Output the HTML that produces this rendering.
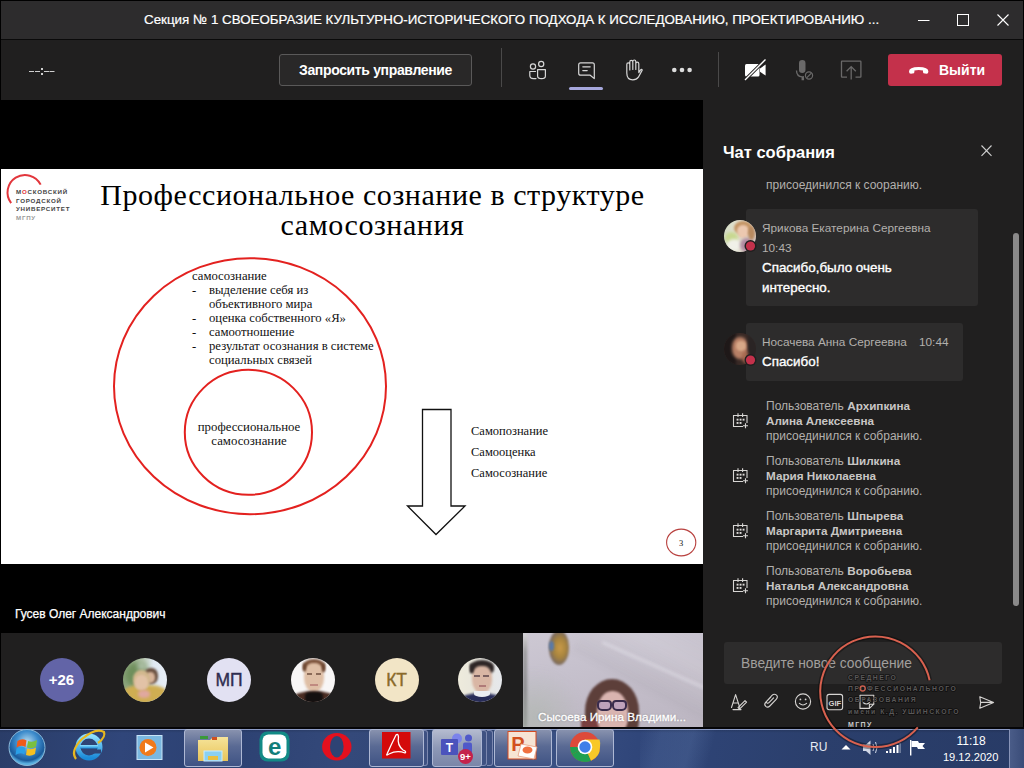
<!DOCTYPE html>
<html><head><meta charset="utf-8">
<style>
*{margin:0;padding:0;box-sizing:border-box}
html,body{width:1024px;height:768px;overflow:hidden;background:#000;font-family:"Liberation Sans",sans-serif}
.abs{position:absolute}
.av{top:25px;width:44px;height:44px;border-radius:50%;text-align:center;line-height:44px;overflow:hidden;isolation:isolate}
.cav{width:32px;height:32px;border-radius:50%;overflow:hidden;z-index:1;isolation:isolate}
.bub{background:#2d2c2c;border-radius:3px}
.nm{color:#b3b0ad;font-size:11.8px;line-height:14px;white-space:nowrap}
.msg{color:#fff;font-size:13.4px;-webkit-text-stroke:0.35px #fff;line-height:19.5px;white-space:nowrap}
.sys{color:#b3b0ad;font-size:12px;line-height:15px;white-space:nowrap}
.sysb{color:#b3b0ad;font-size:12px;line-height:15px;white-space:nowrap}
.sysb b{color:#c8c6c4;font-size:11.7px;line-height:1}
.serif{font-family:"Liberation Serif",serif}
#title{left:0;top:0;width:1024px;height:39px;background:#2d2c2d}
#tline{left:0;top:39px;width:1024px;height:1px;background:#0a0a0a}
#tool{left:0;top:40px;width:1024px;height:60px;background:#201f1f}
#video{left:0;top:100px;width:703px;height:533px;background:#000}
#slide{left:1px;top:169px;width:702px;height:395px;background:#fff;overflow:hidden}
#strip{left:0;top:633px;width:523px;height:95px;background:#201f1f}
#cam{left:523px;top:633px;width:180px;height:94px;background:#cfcbd0}
#chat{left:703px;top:100px;width:321px;height:628px;background:#201f1f}
#task{left:0;top:727px;width:1024px;height:41px;background:#2f4575}
.tbtn{top:2px;height:38px;border:1px solid #aeb8d4;border-radius:3px;background:linear-gradient(#8892ae,#5a6a94 45%,#3f5384)}
.tstk{top:3px;height:36px;border:1px solid #7c88b0;border-left:none;border-radius:0 3px 3px 0;background:#3e5182}
</style></head><body>
<div class="abs" style="left:0;top:0;width:1024px;height:727px;border-left:1px solid #000;border-right:1px solid #000;border-top:1px solid #000;z-index:5;pointer-events:none"></div>
<div id="title" class="abs">
<div class="abs" id="ttext" style="left:144px;top:11px;white-space:nowrap;color:#fff;font-size:13.35px;line-height:18px;-webkit-text-stroke:0.2px #fff">Секция № 1 СВОЕОБРАЗИЕ КУЛЬТУРНО-ИСТОРИЧЕСКОГО ПОДХОДА К ИССЛЕДОВАНИЮ, ПРОЕКТИРОВАНИЮ ...</div>
<svg class="abs" style="left:0;top:0" width="1024" height="38">
<line x1="918" y1="20.5" x2="929.5" y2="20.5" stroke="#fff" stroke-width="1"/>
<rect x="957.5" y="14.5" width="11" height="11" fill="none" stroke="#fff" stroke-width="1"/>
<path d="M997.5 14.5 L1008.5 25.5 M1008.5 14.5 L997.5 25.5" stroke="#fff" stroke-width="1.1"/>
</svg>
</div>
<div id="tline" class="abs"></div>
<div id="tool" class="abs">
<div class="abs" style="left:279px;top:14px;width:193px;height:32px;border:1px solid #5a5959;border-radius:3px;background:#292828;color:#fff;font-weight:bold;font-size:14px;letter-spacing:-0.35px;line-height:30px;text-align:center">Запросить управление</div>
<div class="abs" style="left:501px;top:8px;width:1px;height:39px;background:#4a4949"></div>
<div class="abs" style="left:718px;top:12px;width:1px;height:35px;background:#4a4949"></div>
<div class="abs" style="left:569px;top:47px;width:34px;height:3px;border-radius:2px;background:#a6a7dc"></div>
<div class="abs" style="left:888px;top:14px;width:114px;height:32px;border-radius:3px;background:#c4314b;color:#fff;font-weight:bold;font-size:14px;line-height:32px"><span class="abs" style="left:51px;top:0">Выйти</span></div>
<svg class="abs" style="left:0;top:-40px" width="1024" height="100">
<g fill="#cfcfcf"><rect x="29" y="71" width="5" height="1"/><rect x="35" y="71" width="5" height="1"/><rect x="44" y="71" width="5" height="1"/><rect x="49.5" y="71" width="5" height="1"/><rect x="41" y="68" width="2" height="2"/><rect x="41" y="73" width="2" height="2"/></g>
<g fill="none" stroke="#d6d6d6" stroke-width="1.2" stroke-linecap="round" stroke-linejoin="round">
<circle cx="533" cy="66.5" r="2.6"/><circle cx="541.2" cy="64" r="2.6"/>
<path d="M537.6 69.6 H545.4 V76 Q545.4 78.6 541.5 78.6 Q537.6 78.6 537.6 76 Z"/>
<path d="M535.5 71.5 H529.8 V75.5 Q529.8 78.6 533.5 78.6 H536"/>
<path d="M580.6 62.8 H592.4 Q594.3 62.8 594.3 64.8 V78.6 L590.2 75.2 H580.6 Q578.7 75.2 578.7 73.2 V64.8 Q578.7 62.8 580.6 62.8 Z"/>
<path d="M582.8 66.8 H590.2 M582.8 70.6 H587.2"/>
<path d="M626.8 73 V64.6 Q626.8 62.9 628.3 62.9 Q629.8 62.9 629.8 64.6 V70 M629.8 64.6 V61.9 Q629.8 60.3 631.3 60.3 Q632.8 60.3 632.8 61.9 V69.5 M632.8 61.9 V61.6 Q632.8 60 634.3 60 Q635.8 60 635.8 61.6 V69.5 M635.8 63.8 Q635.8 62.2 637.3 62.2 Q638.8 62.2 638.8 63.8 V72.6 L640.6 69.9 Q641.7 68.9 642.2 70.1 L638.4 77.2 Q636.6 79.8 632.8 79.8 Q626.8 79.8 626.8 73"/>
</g>
<g fill="#dcdcdc"><circle cx="674.3" cy="70" r="2.3"/><circle cx="682" cy="70" r="2.3"/><circle cx="689.6" cy="70" r="2.3"/></g>
<g>
<rect x="745" y="64" width="14.5" height="12.5" rx="1.5" fill="#fff"/>
<path d="M760 68.5 L765.6 64.6 V75.6 L760 71.8 Z" fill="#fff"/>
<line x1="743.5" y1="81.5" x2="766.5" y2="58.5" stroke="#201f1f" stroke-width="3.2"/>
<line x1="745" y1="80" x2="765.5" y2="59.5" stroke="#fff" stroke-width="1.3"/>
</g>
<g fill="#6a6969">
<rect x="799" y="60" width="6.5" height="13" rx="3.2"/>
<path d="M796.5 70.5 Q796.5 76.5 802.2 76.8 V79.6 H803.4 V76.8 L804 76.7" fill="none" stroke="#6a6969" stroke-width="1.3"/>
<circle cx="809" cy="75.5" r="5.2" fill="#201f1f"/>
<circle cx="809" cy="75.5" r="3.6" fill="none" stroke="#6a6969" stroke-width="1.2"/>
<line x1="806.6" y1="77.9" x2="811.4" y2="73.1" stroke="#6a6969" stroke-width="1.2"/>
</g>
<g fill="none" stroke="#6a6969" stroke-width="1.3">
<path d="M847 77.2 H842 Q841.5 77.2 841.5 76.6 V61.8 Q841.5 61.2 842 61.2 H860.3 Q860.9 61.2 860.9 61.8 V76.6 Q860.9 77.2 860.3 77.2 H855.5"/>
<path d="M851.2 79.6 V67 M846.6 71.2 L851.2 66.6 L855.8 71.2"/>
</g>
<path d="M909 71.5 Q909 67 918.7 67 Q928.4 67 928.4 71.5 Q928.4 73.8 926.5 73.8 L923.5 73.2 Q922.7 72.5 923 70.6 Q918.7 69.6 914.4 70.6 Q914.7 72.5 913.9 73.2 L910.9 73.8 Q909 73.8 909 71.5 Z" fill="#fff"/>
</svg>
</div>
<div id="video" class="abs"></div>
<div class="abs" style="left:15px;top:607px;color:#fff;font-size:12px;line-height:14px;white-space:nowrap;-webkit-text-stroke:0.25px #fff">Гусев Олег Александрович</div>
<div id="slide" class="abs">
<svg class="abs" style="left:-1px;top:-169px" width="704" height="564">
<path d="M40.65 184.66 A17.5 17.5 0 1 0 11.15 203.2" fill="none" stroke="#e2363c" stroke-width="2"/>
<ellipse cx="250" cy="386.2" rx="136" ry="128" fill="none" stroke="#e3211f" stroke-width="2"/>
<ellipse cx="248.4" cy="432.3" rx="63.6" ry="62.5" fill="none" stroke="#e3211f" stroke-width="2"/>
<path d="M422.5 409.5 H451 V506 H465 L436 534.5 L407.5 506 H422.5 Z" fill="#fff" stroke="#111" stroke-width="1.3"/>
<ellipse cx="681.2" cy="542.5" rx="14.6" ry="13.4" fill="none" stroke="#b8403e" stroke-width="1.1"/>
</svg>
<div class="abs logo" style="left:15px;top:19px;font-size:6.2px;line-height:8.7px;letter-spacing:0.75px;font-weight:bold;color:#444;white-space:nowrap">М<span style="color:#e2363c">О</span>СКОВСКИЙ<br>ГОРОДСКОЙ<br>УНИВЕРСИТЕТ<br><span style="color:#9a9a9a">МГПУ</span></div>
<div class="abs serif" id="stitle" style="left:0;width:743px;top:10.5px;text-align:center;font-size:30px;letter-spacing:0.55px;line-height:30.7px;color:#000">Профессиональное сознание в структуре<br>самосознания</div>
<div class="abs serif" style="left:191px;top:100px;font-size:12.7px;line-height:14.02px;color:#111;white-space:nowrap">самосознание<br>
-<span style="position:absolute;left:17px">выделение себя из</span><br><span style="position:relative;left:17px">объективного мира</span><br>
-<span style="position:absolute;left:17px">оценка собственного «Я»</span><br>
-<span style="position:absolute;left:17px">самоотношение</span><br>
-<span style="position:absolute;left:17px">результат осознания в системе</span><br><span style="position:relative;left:17px">социальных связей</span></div>
<div class="abs serif" style="left:148px;width:200px;top:251px;text-align:center;font-size:12.8px;line-height:14.2px;color:#111">профессиональное<br>самосознание</div>
<div class="abs serif" style="left:470px;top:252px;font-size:12.5px;line-height:21px;color:#111;white-space:nowrap">Самопознание<br>Самооценка<br>Самосознание</div>
<div class="abs serif" style="left:678px;top:368.5px;font-size:8.5px;line-height:10px;color:#111">3</div>
</div>
<div id="strip" class="abs">
<div class="abs av" style="left:39.5px;background:#6264a7;color:#fff;font-weight:bold;font-size:15px">+26</div>
<div class="abs av" style="left:123.3px;background:linear-gradient(90deg,#8aa27a 0,#b8c8b0 45%,#dfe8f2 70%,#e8eef6 100%)">
<div class="abs b" style="left:2px;top:4px;width:22px;height:26px;border-radius:50%;background:#6f8f5c;filter:blur(2.5px)"></div>
<div class="abs b" style="left:14px;top:3px;width:10px;height:10px;border-radius:50%;background:#a8bba0;filter:blur(2px)"></div>
<div class="abs b" style="left:0;top:27px;width:44px;height:20px;border-radius:40% 40% 0 0;background:#cfae52;filter:blur(1.5px)"></div>
<div class="abs b" style="left:21px;top:10px;width:14px;height:16px;border-radius:45%;background:#6a5040;filter:blur(1px)"></div>
<div class="abs b" style="left:23px;top:14px;width:9px;height:11px;border-radius:45%;background:#d8b49a;filter:blur(1px)"></div>
<div class="abs b" style="left:10px;top:12px;width:17px;height:20px;border-radius:45%;background:#d2b88e;filter:blur(1px)"></div>
<div class="abs b" style="left:12px;top:17px;width:13px;height:15px;border-radius:45%;background:#e2c2a6;filter:blur(1px)"></div>
<div class="abs b" style="left:15px;top:32px;width:12px;height:8px;border-radius:45%;background:#e0a8a0;filter:blur(1.5px)"></div>
</div>
<div class="abs av" style="left:207px;background:#e2e1f2;color:#2e2d50;font-size:17.5px;-webkit-text-stroke:0.4px #2e2d50">МП</div>
<div class="abs av" style="left:290.8px;background:#f8f6f6">
<div class="abs" style="left:12px;top:1px;width:22px;height:14px;border-radius:50% 50% 30% 30%;background:#7a5038;filter:blur(0.8px)"></div>
<div class="abs" style="left:13px;top:5px;width:20px;height:29px;border-radius:42% 42% 48% 48%;background:#dfbfa6;filter:blur(0.8px)"></div>
<div class="abs" style="left:12px;top:5px;width:3px;height:8px;border-radius:40%;background:#6a4430;filter:blur(0.8px)"></div>
<div class="abs" style="left:31px;top:5px;width:3px;height:9px;border-radius:40%;background:#6a4430;filter:blur(0.8px)"></div>
<div class="abs" style="left:16px;top:15px;width:5px;height:2px;background:#8a6a58;filter:blur(0.6px)"></div>
<div class="abs" style="left:25px;top:15px;width:5px;height:2px;background:#8a6a58;filter:blur(0.6px)"></div>
<div class="abs" style="left:19px;top:26px;width:8px;height:2px;background:#c08a80;filter:blur(0.6px)"></div>
<div class="abs" style="left:2px;top:33px;width:42px;height:14px;border-radius:50% 50% 0 0;background:#4a2c22;filter:blur(0.8px)"></div>
<div class="abs" style="left:14px;top:34px;width:18px;height:12px;border-radius:30%;background:#141010;filter:blur(0.8px)"></div>
</div>
<div class="abs av" style="left:374.6px;background:#f2e5c6;color:#8a6a2a;font-size:17.5px;-webkit-text-stroke:0.4px #8a6a2a">КТ</div>
<div class="abs av" style="left:458.4px;background:linear-gradient(90deg,#eeebdc 0,#e8e6dc 40%,#e6e8ec 100%)">
<div class="abs" style="left:12px;top:2px;width:24px;height:14px;border-radius:50% 50% 30% 30%;background:#2e2626;filter:blur(0.8px)"></div>
<div class="abs" style="left:14px;top:8px;width:20px;height:27px;border-radius:42% 42% 48% 48%;background:#d9b6a4;filter:blur(0.8px)"></div>
<div class="abs" style="left:12px;top:6px;width:3px;height:9px;background:#2e2626;filter:blur(0.8px)"></div>
<div class="abs" style="left:16px;top:17px;width:6px;height:2px;background:#7a6060;filter:blur(0.6px)"></div>
<div class="abs" style="left:25px;top:17px;width:6px;height:2px;background:#7a6060;filter:blur(0.6px)"></div>
<div class="abs" style="left:21px;top:27px;width:7px;height:2px;background:#b07a78;filter:blur(0.6px)"></div>
<div class="abs" style="left:2px;top:35px;width:42px;height:13px;border-radius:50% 50% 0 0;background:#282c58;filter:blur(0.8px)"></div>
<div class="abs" style="left:16px;top:33px;width:16px;height:6px;border-radius:0 0 50% 50%;background:#eceef2;filter:blur(0.6px)"></div>
</div>
</div>
<div id="cam" class="abs" style="overflow:hidden;background:linear-gradient(165deg,#cdc8d3 0,#c6c1cd 35%,#c2bcc8 60%,#bcb6c2 100%)">
<div class="abs" style="left:60px;top:-30px;width:160px;height:90px;transform:rotate(28deg);background:linear-gradient(180deg,rgba(255,255,255,0) 0,rgba(255,255,255,0.12) 50%,rgba(0,0,0,0.03) 100%);filter:blur(3px)"></div>
<div class="abs" style="left:-10px;top:35px;width:70px;height:70px;background:radial-gradient(ellipse at 30% 70%,rgba(165,180,160,0.45),transparent 70%);filter:blur(4px)"></div>
<div class="abs" style="left:0;top:0;width:4px;height:94px;background:linear-gradient(#d8d8d8 0,#9a9a9a 20%,#8a8a8c 60%,#9aa09a 100%);filter:blur(1.5px)"></div>
<div class="abs" style="left:80px;top:8px;width:120px;height:3px;transform:rotate(24deg);transform-origin:0 0;background:rgba(230,228,236,0.5);filter:blur(1.5px)"></div>
<div class="abs" style="left:26px;top:-2px;width:20px;height:34px;border-radius:45% 45% 50% 50%;background:radial-gradient(ellipse at 55% 50%,#c89a48 0,#a8843e 40%,#7a6a60 70%,rgba(120,110,110,0) 100%);filter:blur(1px)"></div>
<div class="abs" style="left:26px;top:8px;width:5px;height:10px;border-radius:50%;background:#5a7aa8;filter:blur(1px)"></div>
<div class="abs" style="left:62px;top:46px;width:54px;height:64px;border-radius:50% 50% 35% 35%;background:#5d3f3a;filter:blur(1.2px)"></div>
<div class="abs" style="left:58px;top:86px;width:24px;height:12px;background:#7a4040;filter:blur(1px)"></div>
<div class="abs" style="left:74px;top:58px;width:31px;height:44px;border-radius:48% 48% 40% 40%;background:#d9b4b0;filter:blur(1px)"></div>
<div class="abs" style="left:74px;top:67px;width:15px;height:11px;border:2px solid #3a2c4c;border-radius:4px 4px 5px 5px;background:rgba(140,130,210,0.35)"></div>
<div class="abs" style="left:89px;top:67px;width:15px;height:11px;border:2px solid #3a2c4c;border-radius:4px 4px 5px 5px;background:rgba(140,130,210,0.35)"></div>
<div class="abs" style="left:15px;top:77px;color:#fff;font-size:11.7px;line-height:14px;white-space:nowrap;-webkit-text-stroke:0.3px #fff;text-shadow:0 0 2px rgba(0,0,0,0.35)">Сысоева Ирина Владими...</div>
</div>
<div id="chat" class="abs">
<div class="abs" style="left:20px;top:43px;color:#fff;font-weight:bold;font-size:16.5px;line-height:18px;white-space:nowrap">Чат собрания</div>
<svg class="abs" style="left:-703px;top:-100px;z-index:2" width="1024" height="728">
<path d="M981.5 145.5 L991.5 155.8 M991.5 145.5 L981.5 155.8" stroke="#d0d0d0" stroke-width="1.1"/>
<defs>
<radialGradient id="a1" cx="50%" cy="40%" r="60%"><stop offset="0" stop-color="#e8c9a8"/><stop offset="0.45" stop-color="#c99a6a"/><stop offset="0.7" stop-color="#d8d0b0"/><stop offset="1" stop-color="#8a7a6a"/></radialGradient>
<radialGradient id="a2" cx="45%" cy="45%" r="60%"><stop offset="0" stop-color="#c89078"/><stop offset="0.4" stop-color="#7a4a38"/><stop offset="0.8" stop-color="#3a2a26"/><stop offset="1" stop-color="#2a2222"/></radialGradient>
</defs>
<circle cx="750.5" cy="246" r="6" fill="#201f1f"/><circle cx="750.5" cy="246" r="4.6" fill="#c4314b"/>
<circle cx="750.5" cy="360" r="6" fill="#201f1f"/><circle cx="750.5" cy="360" r="4.6" fill="#c4314b"/>
<g transform="translate(733,413)" fill="none" stroke="#d8d6d4" stroke-width="1.1"><path d="M14 10 V2.5 H0.5 V13.5 H10"/><path d="M5 0.3 V4 M9.6 0.3 V4"/><g fill="#dcdad8" stroke="none"><rect x="3.6" y="5.7" width="1.9" height="1.9"/><rect x="6.6" y="5.7" width="1.9" height="1.9"/><rect x="9.6" y="5.7" width="1.9" height="1.9"/><rect x="3.6" y="9" width="1.9" height="1.9"/><rect x="6.6" y="9" width="1.9" height="1.9"/></g><path d="M12.5 10.2 V15.2 M10 12.7 H15"/></g><g transform="translate(733,468)" fill="none" stroke="#d8d6d4" stroke-width="1.1"><path d="M14 10 V2.5 H0.5 V13.5 H10"/><path d="M5 0.3 V4 M9.6 0.3 V4"/><g fill="#dcdad8" stroke="none"><rect x="3.6" y="5.7" width="1.9" height="1.9"/><rect x="6.6" y="5.7" width="1.9" height="1.9"/><rect x="9.6" y="5.7" width="1.9" height="1.9"/><rect x="3.6" y="9" width="1.9" height="1.9"/><rect x="6.6" y="9" width="1.9" height="1.9"/></g><path d="M12.5 10.2 V15.2 M10 12.7 H15"/></g><g transform="translate(733,523)" fill="none" stroke="#d8d6d4" stroke-width="1.1"><path d="M14 10 V2.5 H0.5 V13.5 H10"/><path d="M5 0.3 V4 M9.6 0.3 V4"/><g fill="#dcdad8" stroke="none"><rect x="3.6" y="5.7" width="1.9" height="1.9"/><rect x="6.6" y="5.7" width="1.9" height="1.9"/><rect x="9.6" y="5.7" width="1.9" height="1.9"/><rect x="3.6" y="9" width="1.9" height="1.9"/><rect x="6.6" y="9" width="1.9" height="1.9"/></g><path d="M12.5 10.2 V15.2 M10 12.7 H15"/></g><g transform="translate(733,578)" fill="none" stroke="#d8d6d4" stroke-width="1.1"><path d="M14 10 V2.5 H0.5 V13.5 H10"/><path d="M5 0.3 V4 M9.6 0.3 V4"/><g fill="#dcdad8" stroke="none"><rect x="3.6" y="5.7" width="1.9" height="1.9"/><rect x="6.6" y="5.7" width="1.9" height="1.9"/><rect x="9.6" y="5.7" width="1.9" height="1.9"/><rect x="3.6" y="9" width="1.9" height="1.9"/><rect x="6.6" y="9" width="1.9" height="1.9"/></g><path d="M12.5 10.2 V15.2 M10 12.7 H15"/></g>
<g fill="none" stroke="#d6d4d2" stroke-width="1.1" stroke-linecap="round" stroke-linejoin="round">
<path d="M731.5 707.5 L735.6 694.6 L739.8 707.5 M733 703 H738.3"/>
<path d="M733 709.6 H741"/>
<path d="M739.5 709.2 L746.6 702.2 L745 700.6 L738 707.6 Z"/>
<path d="M770.8 697 L765.6 702.4 Q763.8 704.6 765.8 706.4 Q767.8 708 769.8 706 L776.4 699.2 Q778.4 696.6 776.2 694.9 Q774 693.4 772 695.4 L766.8 701 Q766 702.2 767 703 Q768 703.6 769 702.6 L773.6 697.8"/>
<circle cx="803" cy="701.5" r="7.6"/>
<path d="M799.4 703.4 Q803 706.6 806.6 703.4"/>
<rect x="827" y="694.4" width="15.6" height="15.4" rx="2.2"/>
<path d="M860 695.2 H873.8 V704.2 L869.4 708.4 H860 Z M869.4 708.4 V704.6 Q869.4 704.2 869.8 704.2 H873.8"/>
<path d="M863 702.5 Q866.5 705.5 869.5 702.5"/>
<path d="M979.8 696.8 L993.6 702.4 L979.8 708.2 Q981.4 702.4 979.8 696.8 Z M981.4 702.4 H993.4"/>
</g>
<g fill="#d6d4d2"><circle cx="800.4" cy="699.4" r="0.9"/><circle cx="805.6" cy="699.4" r="0.9"/><circle cx="863.8" cy="699.4" r="0.8"/><circle cx="868.4" cy="699.4" r="0.8"/></g>
<text x="834.8" y="705.6" fill="#d6d4d2" font-family="Liberation Sans" font-weight="bold" font-size="7.6" text-anchor="middle">GIF</text>
</svg>
<div class="abs" style="left:0;top:75px;width:321px;height:470px;overflow:hidden">
 <div class="abs sys" style="left:63px;top:2.5px">присоединился к сооранию.</div>
</div>
<div class="abs bub" style="left:43px;top:109px;width:232px;height:97px">
 <div class="abs nm" style="left:16px;top:12px">Ярикова Екатерина Сергеевна</div>
 <div class="abs nm" style="left:16px;top:32px">10:43</div>
 <div class="abs msg" style="left:16px;top:49px">Спасибо,было очень<br>интересно.</div>
</div>
<div class="abs bub" style="left:43px;top:223px;width:217px;height:58px">
 <div class="abs nm" style="left:16px;top:12px">Носачева Анна Сергеевна</div>
 <div class="abs nm" style="left:173px;top:12px">10:44</div>
 <div class="abs msg" style="left:16px;top:29px">Спасибо!</div>
</div>
<div class="abs cav" style="left:21px;top:119.5px;background:linear-gradient(90deg,#d4dcc4 0,#e2e0d0 40%,#d8c8c0 100%)">
<div class="abs" style="left:10px;top:1px;width:18px;height:14px;border-radius:50%;background:#c49464;filter:blur(1.2px)"></div>
<div class="abs" style="left:13px;top:5px;width:12px;height:13px;border-radius:45%;background:#ecc8b0;filter:blur(0.8px)"></div>
<div class="abs" style="left:1px;top:12px;width:13px;height:12px;border-radius:50%;background:#c8d890;filter:blur(1.5px)"></div>
<div class="abs" style="left:3px;top:19px;width:14px;height:12px;border-radius:50%;background:#f0f0e8;filter:blur(1.5px)"></div>
<div class="abs" style="left:16px;top:18px;width:14px;height:14px;border-radius:50%;background:#b08aa0;filter:blur(1.5px)"></div>
<div class="abs" style="left:24px;top:6px;width:7px;height:14px;border-radius:50%;background:#b88a60;filter:blur(1px)"></div>
</div>
<div class="abs cav" style="left:21px;top:233px;background:#3a2a26">
<div class="abs" style="left:-2px;top:-2px;width:14px;height:36px;background:#1e1818;filter:blur(1.5px)"></div>
<div class="abs" style="left:8px;top:4px;width:16px;height:22px;border-radius:45%;background:#b88066;filter:blur(1.5px)"></div>
<div class="abs" style="left:12px;top:8px;width:10px;height:10px;border-radius:45%;background:#d8a888;filter:blur(1.2px)"></div>
<div class="abs" style="left:18px;top:18px;width:10px;height:12px;border-radius:45%;background:#a86a50;filter:blur(1.5px)"></div>
<div class="abs" style="left:24px;top:0px;width:10px;height:32px;background:#2a2424;filter:blur(1.5px)"></div>
</div>
<div class="abs sysb" style="left:63px;top:299px">Пользователь <b>Архипкина</b><br><b>Алина Алексеевна</b><br>присоединился к собранию.</div>
<div class="abs sysb" style="left:63px;top:354px">Пользователь <b>Шилкина</b><br><b>Мария Николаевна</b><br>присоединился к собранию.</div>
<div class="abs sysb" style="left:63px;top:409px">Пользователь <b>Шпырева</b><br><b>Маргарита Дмитриевна</b><br>присоединился к собранию.</div>
<div class="abs sysb" style="left:63px;top:464px">Пользователь <b>Воробьева</b><br><b>Наталья Александровна</b><br>присоединился к собранию.</div>
<div class="abs" style="left:310px;top:133px;width:6px;height:373px;border-radius:3px;background:#8a8989"></div>
<div class="abs" style="left:21px;top:542px;width:278px;height:42px;border-radius:3px;background:#2d2c2c"></div>
<div class="abs" style="left:38px;top:556px;color:#a19f9d;font-size:13.8px;line-height:16px;white-space:nowrap">Введите новое сообщение</div>
</div>
<div id="task" class="abs">
<div class="abs" style="left:0;top:0;width:1024px;height:2px;background:#050508"></div>
<div class="abs" style="left:0;top:2px;width:1024px;height:1px;background:#8c9bc6"></div>
<div class="abs" style="left:0;top:3px;width:1024px;height:38px;background:linear-gradient(100deg,#2a3d68 0%,#30467a 12%,#2c4172 22%,#34497a 34%,#2f4575 46%,#3a5083 54%,#30467a 62%,#2b3f6c 80%,#283b66 100%)"></div>
<div class="abs" style="left:640px;top:3px;width:80px;height:38px;background:linear-gradient(105deg,transparent 0,rgba(120,150,200,0.16) 25%,rgba(120,150,200,0.2) 60%,transparent 85%)"></div>
<div class="abs" style="left:0;top:3px;width:1024px;height:3px;background:linear-gradient(rgba(0,0,0,0.12),transparent)"></div>
<div class="abs tbtn" style="left:184px;width:58px"></div>
<div class="abs tstk" style="left:423px;width:5px"></div>
<div class="abs tbtn" style="left:369px;width:55px"></div>
<div class="abs tstk" style="left:487px;width:6px"></div>
<div class="abs tstk" style="left:481px;width:6px"></div>
<div class="abs tbtn" style="left:432px;width:50px;background:linear-gradient(#b4bbcf,#8d98b6 50%,#7a86a8)"></div>
<div class="abs tbtn" style="left:494px;width:58px"></div>
<div class="abs tbtn" style="left:556px;width:58px"></div>
<div class="abs" style="left:1009px;top:2px;width:15px;height:39px;border-left:1px solid #8894b8;background:linear-gradient(90deg,#4a5c88,#3a4c78)"></div>
<svg class="abs" style="left:0;top:-728px" width="1024" height="768">
<defs>
<radialGradient id="orb" cx="50%" cy="35%" r="60%"><stop offset="0" stop-color="#b8dcf0"/><stop offset="0.5" stop-color="#3d8ccc"/><stop offset="0.85" stop-color="#1a5a9a"/><stop offset="1" stop-color="#5ab0e0"/></radialGradient>
<linearGradient id="ie" x1="0" y1="0" x2="0" y2="1"><stop offset="0" stop-color="#8fe0ff"/><stop offset="1" stop-color="#1a8ad8"/></linearGradient>
<linearGradient id="fold" x1="0" y1="0" x2="0" y2="1"><stop offset="0" stop-color="#f6e49a"/><stop offset="1" stop-color="#e8c45a"/></linearGradient>
</defs>
<circle cx="27" cy="748.5" r="18" fill="url(#orb)" stroke="#8ab8d8" stroke-width="1"/>
<path d="M17.5 742 Q22 739 26.5 741.5 L25.5 748 Q21 745.5 16.5 748.5 Z" fill="#f05a1a"/>
<path d="M28 742 Q32.5 744 37 741 L36 747.5 Q31.5 750.5 27 748.5 Z" fill="#7ac040"/>
<path d="M16.5 749.5 Q21 746.5 25.5 749 L24.5 755.5 Q20 753 15.5 756 Z" fill="#2aa0e8"/>
<path d="M27 749.5 Q31.5 751.5 36 748.5 L35 755 Q30.5 758 26 756 Z" fill="#f8c020"/>
<circle cx="89" cy="748" r="11" fill="none" stroke="url(#ie)" stroke-width="5"/>
<rect x="80" y="746" width="18" height="3.5" fill="url(#ie)"/>
<rect x="89" y="750.5" width="12" height="4" fill="#2f4575"/>
<path d="M76 760 Q70 752 82 740 Q96 728 104 733 Q106 738 98 744" fill="none" stroke="#e8b820" stroke-width="2.2"/>
<rect x="137" y="736.5" width="25" height="24" fill="#7ab8e0" stroke="#c8e4f8" stroke-width="1"/>
<circle cx="148" cy="748.5" r="8.5" fill="#f07a1a"/>
<path d="M145 743.5 L153.5 748.5 L145 753.5 Z" fill="#fff"/>
<path d="M198 741 H210 L213 738 H228 V762 H198 Z" fill="url(#fold)"/>
<rect x="200" y="737" width="8" height="3" fill="#3a9a3a"/>
<rect x="212" y="738" width="5" height="3" fill="#d05020"/>
<rect x="204" y="752" width="18" height="10" fill="#8ad0f0" stroke="#c8ecff" stroke-width="1"/>
<rect x="208" y="757" width="10" height="4" fill="#e8c040"/>
<rect x="259.5" y="732.5" width="30" height="30" rx="8" fill="#128a86"/>
<rect x="262.5" y="735.5" width="24" height="24" rx="6" fill="#fff"/>
<text x="274.8" y="756" font-family="Liberation Sans" font-weight="bold" font-size="24" fill="#127e7a" text-anchor="middle">e</text>
<ellipse cx="336.8" cy="747.7" rx="14.7" ry="13.8" fill="#e4101e"/>
<ellipse cx="336.8" cy="747.7" rx="6.8" ry="10.8" fill="#2e4374"/>
<rect x="382" y="733" width="28.5" height="26.5" fill="#d40a0a"/>
<path d="M387 755 Q392 744 396 736 Q398 734 398.5 738 Q397 746 403 751 Q407 752.5 405 754 Q397 751 389 755 Q386 757 387 755 Z" fill="none" stroke="#fff" stroke-width="1.3"/>
<circle cx="457" cy="739.5" r="5" fill="#7b83eb"/>
<circle cx="468.5" cy="739" r="3.5" fill="#5059c9"/>
<rect x="463" y="743.5" width="9" height="12" rx="2" fill="#5059c9"/>
<rect x="441" y="740" width="17" height="16" rx="1" fill="#4b53bc"/>
<text x="449.5" y="752.5" font-family="Liberation Sans" font-weight="bold" font-size="12" fill="#fff" text-anchor="middle">T</text>
<circle cx="465.5" cy="757.5" r="7.5" fill="#c4214b"/>
<text x="465.5" y="761.2" font-family="Liberation Sans" font-weight="bold" font-size="9.5" fill="#fff" text-anchor="middle">9+</text>
<rect x="508" y="732.5" width="28" height="27.5" fill="#f6e4d4" stroke="#d44a20" stroke-width="1"/>
<text x="518" y="752" font-family="Liberation Sans" font-weight="bold" font-size="20" fill="#d2501e" text-anchor="middle">P</text>
<path d="M521 745 L537 748 L534 760 L518 757 Z" fill="#fff" stroke="#e8a080" stroke-width="0.8"/>
<ellipse cx="527.5" cy="751" rx="5" ry="3.5" fill="#f07040"/>
<circle cx="585" cy="748" r="15" fill="#dd4a3a"/>
<path d="M585 748 L572 755.5 A15 15 0 0 0 591 761.8 Z" fill="#20a050"/>
<path d="M585 748 L591 761.8 A15 15 0 0 0 600 748 Z" fill="#f8c828"/>
<path d="M585 748 L572 755.5 A15 15 0 0 1 585 733 L585 733 Z" fill="none"/>
<path d="M585 740.5 H599.5 A15 15 0 0 1 600 748 L585 748 Z" fill="#f8c828"/>
<path d="M570 748 A15 15 0 0 0 572 755.5 L585 748 Z" fill="#20a050"/>
<circle cx="585" cy="748" r="7.3" fill="#fff"/>
<circle cx="585" cy="748" r="5.7" fill="#3f7fe8"/>
<text x="810" y="751.5" font-family="Liberation Sans" font-size="12" fill="#e8ecf4">RU</text>
<path d="M841.5 750.5 L846 746 L850.5 750.5 Z" fill="#fff"/>
<path d="M863 745.5 H866 L870.5 741.5 V756 L866 752 H863 Z" fill="#cfd6e6"/>
<path d="M873 745 Q875 748.5 873 752 M875.5 743 Q878.5 748.5 875.5 754" fill="none" stroke="#cfd6e6" stroke-width="1"/>
<g fill="#fff"><rect x="886" y="752" width="2" height="2"/><rect x="889.5" y="750" width="2" height="4"/><rect x="893" y="748" width="2" height="6"/><rect x="896.5" y="746" width="2" height="8"/><rect x="899.5" y="744" width="1.2" height="10" fill="#8894b0"/></g>
<rect x="910" y="741" width="1.4" height="15.5" fill="#fff"/>
<path d="M911.5 742 H918 L919 744 H925 L922.5 747 L925 750 H918 L917 748 H911.5 Z" fill="#fff"/>
<text x="971" y="745.5" font-family="Liberation Sans" font-size="12" fill="#fff" text-anchor="middle">11:18</text>
<text x="970.7" y="762" font-family="Liberation Sans" font-size="11.1" fill="#fff" text-anchor="middle">19.12.2020</text>
</svg>
</div>
<svg class="abs" style="left:0;top:0;z-index:10" width="1024" height="768">
<path d="M929.6 680.2 A55.3 55.3 0 1 0 917.8 727.3" fill="none" stroke="rgba(0,0,0,0.35)" stroke-width="5"/>
<path d="M929.6 680.2 A55.3 55.3 0 1 0 917.8 727.3" fill="none" stroke="#d9614f" stroke-width="2"/>
<g font-family="Liberation Sans" font-size="6.8" font-weight="bold" letter-spacing="1.5" fill="#5a5858" style="paint-order:stroke" stroke="rgba(0,0,0,0.55)" stroke-width="1.6">
<text x="848" y="680">СРЕДНЕГО</text>
<text x="848" y="691">ПРОФЕССИОНАЛЬНОГО</text>
<text x="848" y="702.3">ОБРАЗОВАНИЯ</text>
<text x="848" y="713.5">имени К.Д. УШИНСКОГО</text>
</g>
<text x="848" y="726.5" font-family="Liberation Sans" font-size="7" font-weight="bold" letter-spacing="1.4" fill="#c8c8c8">МГПУ</text>
<circle cx="862.7" cy="688.5" r="2.6" fill="none" stroke="#d9614f" stroke-width="1.1"/>
</svg>
</body></html>
